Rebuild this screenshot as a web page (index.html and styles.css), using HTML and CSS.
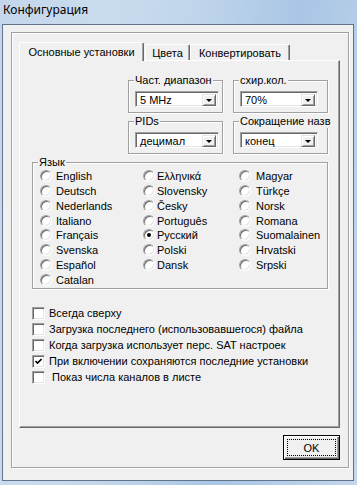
FILE: index.html
```html
<!DOCTYPE html>
<html lang="ru">
<head>
    <meta charset="UTF-8">
    <meta name="viewport" content="width=device-width, initial-scale=1.0">
    <title>Конфигурация</title>
    <link rel="stylesheet" href="styles.css">
</head>
<body>
    <div class="title-bar">Конфигурация</div>

    <div class="client">
        <div class="outer-frame">
            <div class="tab-row">
                <div class="tab tab-active tab-main">Основные установки</div>
                <div class="tab tab-colors">Цвета</div>
                <div class="tab tab-convert">Конвертировать</div>
            </div>

            <div class="tab-panel">
                <div class="group-grid">
                    <div class="group">
                        <div class="group-title">Част. диапазон</div>
                        <div class="combo combo-wide">
                            <span class="combo-value">5 MHz</span>
                            <span class="combo-button"><span class="combo-arrow"></span></span>
                        </div>
                    </div>
                    <div class="group">
                        <div class="group-title">схир.кол.</div>
                        <div class="combo">
                            <span class="combo-value">70%</span>
                            <span class="combo-button"><span class="combo-arrow"></span></span>
                        </div>
                    </div>
                    <div class="group">
                        <div class="group-title">PIDs</div>
                        <div class="combo combo-wide">
                            <span class="combo-value">децимал</span>
                            <span class="combo-button"><span class="combo-arrow"></span></span>
                        </div>
                    </div>
                    <div class="group">
                        <div class="group-title">Сокращение назв</div>
                        <div class="combo">
                            <span class="combo-value">конец</span>
                            <span class="combo-button"><span class="combo-arrow"></span></span>
                        </div>
                    </div>
                </div>

                <div class="group lang-group">
                    <div class="group-title">Язык</div>
                    <div class="lang-columns">
                        <div class="lang-col col-first">
                            <div class="radio-row"><span class="radio"></span>English</div>
                            <div class="radio-row"><span class="radio"></span>Deutsch</div>
                            <div class="radio-row"><span class="radio"></span>Nederlands</div>
                            <div class="radio-row"><span class="radio"></span>Italiano</div>
                            <div class="radio-row"><span class="radio"></span>Français</div>
                            <div class="radio-row"><span class="radio"></span>Svenska</div>
                            <div class="radio-row"><span class="radio"></span>Español</div>
                            <div class="radio-row"><span class="radio"></span>Catalan</div>
                        </div>
                        <div class="lang-col col-second">
                            <div class="radio-row"><span class="radio"></span>Ελληνικά</div>
                            <div class="radio-row"><span class="radio"></span>Slovensky</div>
                            <div class="radio-row"><span class="radio"></span>Česky</div>
                            <div class="radio-row"><span class="radio"></span>Português</div>
                            <div class="radio-row"><span class="radio radio-checked"></span>Русский</div>
                            <div class="radio-row"><span class="radio"></span>Polski</div>
                            <div class="radio-row"><span class="radio"></span>Dansk</div>
                        </div>
                        <div class="lang-col col-third">
                            <div class="radio-row"><span class="radio"></span>Magyar</div>
                            <div class="radio-row"><span class="radio"></span>Türkçe</div>
                            <div class="radio-row"><span class="radio"></span>Norsk</div>
                            <div class="radio-row"><span class="radio"></span>Romana</div>
                            <div class="radio-row"><span class="radio"></span>Suomalainen</div>
                            <div class="radio-row"><span class="radio"></span>Hrvatski</div>
                            <div class="radio-row"><span class="radio"></span>Srpski</div>
                        </div>
                    </div>
                </div>

                <div class="check-list">
                    <div class="check-row"><span class="checkbox"></span>Всегда сверху</div>
                    <div class="check-row"><span class="checkbox"></span>Загрузка последнего (использовавшегося) файла</div>
                    <div class="check-row"><span class="checkbox"></span>Когда загрузка использует перс. SAT настроек</div>
                    <div class="check-row">
                        <span class="checkbox">
                            <svg class="check-mark" viewBox="0 0 7 7" width="7" height="7"><path d="M0.5 3 L2.5 5 L6.5 1" fill="none" stroke="#000" stroke-width="1.6"/></svg>
                        </span>При включении сохраняются последние установки
                    </div>
                    <div class="check-row"><span class="checkbox"></span>&nbsp;Показ числа каналов в листе</div>
                </div>
            </div>

            <button class="ok-button"><span class="ok-focus">OK</span></button>
        </div>
    </div>
</body>
</html>
```

FILE: styles.css
```css
* {
    box-sizing: border-box;
}

html, body {
    margin: 0;
    padding: 0;
}

body {
    width: 357px;
    height: 485px;
    overflow: hidden;
    font-family: "Liberation Sans", Arial, sans-serif;
    font-size: 11px;
    color: #000;
    /* aero glass frame */
    background: linear-gradient(100deg, #c3d6eb 0%, #c9dbee 25%, #c0d5eb 45%, #a9c6e5 68%, #b4cde8 82%, #c2d6ec 100%);
}

.title-bar {
    height: 24px;
    padding-left: 3px;
    line-height: 20px;
    font-family: "Noto Sans", "Open Sans", sans-serif;
    font-size: 12px;
}

.client {
    margin-left: 2px;
    width: 352px;
    height: 457px;
    border: 1px solid #62748a;
    background: #f0f0f0;
    padding: 7px 4px 0 8px;
}

.outer-frame {
    width: 338px;
    height: 436px;
    border: 1px solid #a0a0a0;
    box-shadow: inset 1px 1px 0 #fff, 1px 1px 0 #fff;
    padding: 9px 8px 0 7px;
    display: flex;
    flex-direction: column;
}

/* tabs */
.tab-row {
    display: flex;
    height: 18px;
    align-items: flex-end;
}

.tab {
    height: 16px;
    display: flex;
    align-items: center;
    justify-content: center;
    padding-top: 1px;
    background: #f0f0f0;
    border-top: 1px solid #fff;
    border-left: 1px solid #fff;
    border-right: 1px solid #696969;
    box-shadow: inset -1px 0 0 #a0a0a0;
    border-radius: 2px 2px 0 0;
    white-space: nowrap;
}

.tab-active {
    height: 19px;
    margin-bottom: -1px;
    padding-top: 0;
    position: relative;
    z-index: 1;
}

.tab-main {
    width: 125px;
}

.tab-colors {
    width: 45px;
    margin-left: 1px;
}

.tab-convert {
    width: 100px;
}

.tab-panel {
    width: 321px;
    height: 368px;
    border: 1px solid;
    border-color: #fff #696969 #696969 #fff;
    box-shadow: inset -1px -1px 0 #a0a0a0;
    padding: 19px 11px 0 12px;
}

/* group boxes */
.group-grid {
    display: grid;
    grid-template-columns: 95px 95px;
    column-gap: 10px;
    row-gap: 8px;
    justify-content: end;
}

.group {
    border: 1px solid #a0a0a0;
    box-shadow: inset 1px 1px 0 #fff, 1px 1px 0 #fff;
    padding: 0 3px 5px 6px;
}

.group-title {
    width: fit-content;
    height: 13px;
    line-height: 13px;
    margin-top: -7px;
    margin-left: -1px;
    padding: 0 1px;
    background: #f0f0f0;
    white-space: nowrap;
}

.combo {
    display: flex;
    width: 78px;
    height: 16px;
    margin-top: 4px;
    background: #fff;
    border: 1px solid;
    border-color: #a0a0a0 #fff #fff #a0a0a0;
    box-shadow: inset 1px 1px 0 #696969, inset -1px -1px 0 #e3e3e3;
    padding: 2px;
}

.combo-wide {
    width: 84px;
}

.combo-value {
    flex: 1;
    line-height: 12px;
    padding-left: 2px;
}

.combo-button {
    width: 14px;
    height: 12px;
    display: flex;
    align-items: center;
    justify-content: center;
    background: #f0f0f0;
    border: 1px solid;
    border-color: #e3e3e3 #696969 #696969 #e3e3e3;
    box-shadow: inset 1px 1px 0 #fff, inset -1px -1px 0 #a0a0a0;
}

.combo-arrow {
    width: 0;
    height: 0;
    border-left: 3px solid transparent;
    border-right: 3px solid transparent;
    border-top: 3px solid #000;
}

/* language radios */
.lang-group {
    margin-top: 8px;
    padding: 0 0 1px 0;
}

.lang-group .group-title {
    margin-left: 5px;
}

.lang-columns {
    display: grid;
    grid-template-columns: 103px 96px 1fr;
    padding-left: 7px;
}

.radio-row {
    display: flex;
    align-items: center;
    height: 14.75px;
    white-space: nowrap;
}

.radio {
    flex: none;
    width: 12px;
    height: 12px;
    border-radius: 50%;
    background: #fff;
    border: 1px solid;
    border-color: #a0a0a0 #fff #fff #a0a0a0;
    box-shadow: inset 1px 1px 0 #696969, inset -1px -1px 0 #e3e3e3;
    display: flex;
    align-items: center;
    justify-content: center;
    margin-right: 4px;
}

.col-second .radio {
    margin-right: 2px;
}

.col-third .radio {
    margin-right: 5px;
}

.radio-checked::after {
    content: "";
    width: 4px;
    height: 4px;
    border-radius: 50%;
    background: #000;
}

/* checkboxes */
.check-list {
    margin-top: 16px;
}

.check-row {
    display: flex;
    align-items: center;
    height: 16px;
    white-space: nowrap;
}

.checkbox {
    flex: none;
    width: 13px;
    height: 13px;
    margin-right: 4px;
    background: #fff;
    border: 1px solid;
    border-color: #a0a0a0 #fff #fff #a0a0a0;
    box-shadow: inset 1px 1px 0 #696969, inset -1px -1px 0 #e3e3e3;
    display: flex;
    align-items: center;
    justify-content: center;
}

.check-mark {
    display: block;
}

/* default button */
.ok-button {
    align-self: flex-end;
    width: 57px;
    height: 25px;
    margin-top: 7px;
    padding: 3px;
    font-family: "Liberation Sans", Arial, sans-serif;
    font-size: 11px;
    color: #000;
    background: #f0f0f0;
    border: 1px solid #000;
    box-shadow: inset 1px 1px 0 #fff, inset -1px -1px 0 #696969, inset -2px -2px 0 #a0a0a0;
    display: flex;
}

.ok-focus {
    flex: 1;
    display: flex;
    align-items: center;
    justify-content: center;
    border: 1px dotted #000;
}
```
